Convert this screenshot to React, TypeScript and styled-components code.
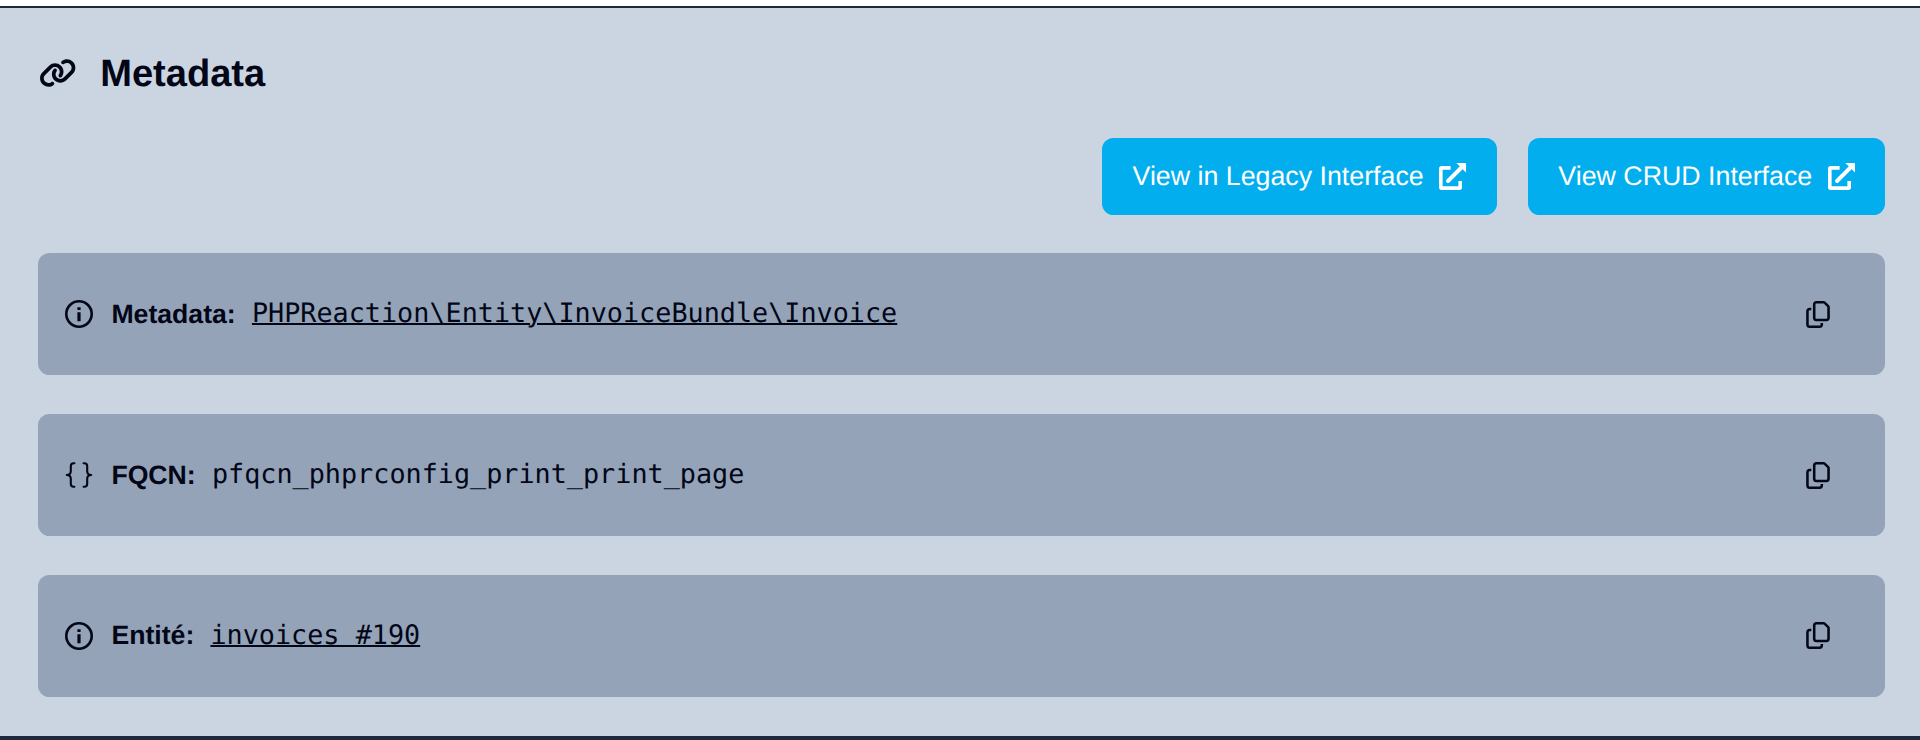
import React from 'react';
import styled, { createGlobalStyle } from 'styled-components';
import { FaLink, FaRegCopy } from 'react-icons/fa6';

const GlobalStyle = createGlobalStyle`
  * { box-sizing: border-box; }
  body {
    margin: 0;
    background: #fff;
    color: #020617;
    font-family: "Liberation Sans", Arial, sans-serif;
    text-rendering: geometricPrecision;
  }
`;

const Page = styled.main`
  display: flex;
  flex-direction: column;
  height: 740px;
  padding-top: 6px;
  overflow: hidden;
`;

const Panel = styled.section`
  display: flex;
  flex-direction: column;
  height: 730px;
  flex-shrink: 0;
  padding: 38px 34.6px 0 38.4px;
  border-top: 2px solid #1e293b;
  background: #cbd5e1;
`;

const Footer = styled.footer`
  flex: 1;
  background: #1e293b;
`;

const Header = styled.h2`
  display: flex;
  align-items: center;
  gap: 24px;
  height: 57px;
  margin: 0;
  padding-left: 0.4px;
  font-size: 38.1px;
  line-height: 57px;

  svg { width: 37.4px; height: 30px; margin-bottom: 2.4px; }
`;

const Actions = styled.div`
  display: flex;
  justify-content: flex-end;
  gap: 30.7px;
  margin: 35px 0 38.2px;
`;

const ActionLink = styled.a`
  display: flex;
  align-items: center;
  gap: 15.4px;
  height: 76.8px;
  padding: 0 30.8px;
  border-radius: 11.5px;
  background: #03aeef;
  color: #fff;
  font-size: 26.78px;

  svg { width: 27px; height: 27px; }
`;

const List = styled.div`
  display: flex;
  flex-direction: column;
  gap: 38.3px;
`;

const Card = styled.div`
  display: flex;
  align-items: center;
  height: 122.5px;
  padding: 0 55px 0 26.2px;
  border-radius: 11.5px;
  background: #94a3b8;
  font-size: 26.8px;
`;

const CardIcon = styled.span`
  display: flex;
  width: 28px;
  margin-right: 18.8px;
  svg { width: 28px; height: 28px; }
`;

const Label = styled.strong`
  margin-right: 16.2px;
  font-size: 26.65px;
`;

const Value = styled.span<{ $link?: boolean }>`
  flex: 1;
  padding-bottom: 0.6px;
  font-family: "DejaVu Sans Mono", monospace;
  text-decoration: ${(p) => (p.$link ? 'underline' : 'none')};
  text-decoration-thickness: 2px;
`;

const CopyButton = styled.button`
  display: flex;
  padding: 0;
  border: 0;
  background: none;
  color: inherit;
  svg { width: 24px; height: 27px; }
`;

const OpenIcon = () => (
  <svg viewBox="0 0 27 27" fill="none" stroke="currentColor">
    <path d="M11.6 4.9H2.6Q1.8 4.9 1.8 5.7V24.3Q1.8 25.1 2.6 25.1H20.4Q21.2 25.1 21.2 24.3V18" strokeWidth="3.6" />
    <path d="M9 18 23 4" strokeWidth="3.9" strokeLinecap="round" />
    <path d="M17.4 0H26.2Q27 0 27 .8V9.6Z" fill="currentColor" stroke="none" />
  </svg>
);

const InfoIcon = () => (
  <svg viewBox="0 0 28 28" fill="none" stroke="currentColor">
    <circle cx="14" cy="14" r="12.7" strokeWidth="2.6" />
    <path d="M14 7.2V10M14 12.2V21.2" strokeWidth="3.2" />
  </svg>
);

const BracesIcon = () => (
  <svg viewBox="0 0 28 28" fill="none" stroke="currentColor" strokeWidth="2.1" strokeLinejoin="round" strokeLinecap="round">
    <path d="M9.4 2.2H8.6Q5.8 2.2 5.8 5.2V10.2Q5.8 14 1.8 14Q5.8 14 5.8 17.8V22.8Q5.8 25.8 8.6 25.8H9.4" />
    <path d="M18.6 2.2H19.4Q22.2 2.2 22.2 5.2V10.2Q22.2 14 26.2 14Q22.2 14 22.2 17.8V22.8Q22.2 25.8 19.4 25.8H18.6" />
  </svg>
);

const rows = [
  { icon: <InfoIcon />, label: 'Metadata:', value: 'PHPReaction\\Entity\\InvoiceBundle\\Invoice', link: true },
  { icon: <BracesIcon />, label: 'FQCN:', value: 'pfqcn_phprconfig_print_print_page', link: false },
  { icon: <InfoIcon />, label: 'Entité:', value: 'invoices #190', link: true },
];

export default function App() {
  return (
    <Page>
      <GlobalStyle />
      <Panel>
        <Header><FaLink />Metadata</Header>
        <Actions>
          <ActionLink>View in Legacy Interface<OpenIcon /></ActionLink>
          <ActionLink>View CRUD Interface<OpenIcon /></ActionLink>
        </Actions>
        <List>
          {rows.map((row) => (
            <Card key={row.label}>
              <CardIcon>{row.icon}</CardIcon>
              <Label>{row.label}</Label>
              <Value $link={row.link}>{row.value}</Value>
              <CopyButton aria-label="Copy"><FaRegCopy /></CopyButton>
            </Card>
          ))}
        </List>
      </Panel>
      <Footer />
    </Page>
  );
}
